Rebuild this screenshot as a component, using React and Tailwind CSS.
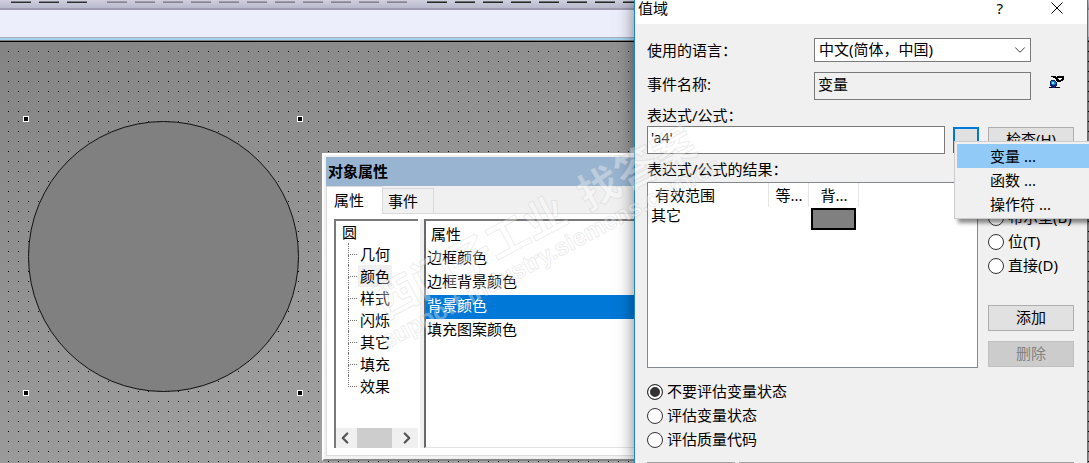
import React, { useState } from 'react';
import { ChevronDown, ChevronLeft, ChevronRight } from 'lucide-react';

const TOOLBAR_GROUPS = [
  { count: 3, tone: 'bg-[#2b302f] border-[#7d8085]' },
  { count: 11, tone: 'bg-[#85868e] border-[#9a9ba6]' },
  { count: 8, tone: 'bg-[#232826] border-[#6c7570]' },
];

const TREE_ITEMS = ['几何', '颜色', '样式', '闪烁', '其它', '填充', '效果'];
const COLOR_PROPERTIES = ['边框颜色', '边框背景颜色', '背景颜色', '填充图案颜色'];
const MENU_ITEMS = ['变量 ...', '函数 ...', '操作符 ...'];
const DATA_TYPES = ['布尔型(B)', '位(T)', '直接(D)'];
const STATUS_OPTIONS = ['不要评估变量状态', '评估变量状态', '评估质量代码'];

const HANDLES = [[23, 74], [297, 74], [23, 348], [297, 348]];

function Toolbar() {
  return (
    <header className="border-b-2 border-[#9d9daf] bg-linear-to-b from-[#cfcfdf] to-[#b9b9cd]">
      <div className="flex h-2 gap-5 overflow-hidden pl-[11px] pt-px">
        {TOOLBAR_GROUPS.map((group, i) => (
          <div key={i} className="flex shrink-0 gap-2">
            {Array.from({ length: group.count }, (_, n) => (
              <span key={n} className={`h-0.5 w-5 border-t ${group.tone}`} />
            ))}
          </div>
        ))}
      </div>
    </header>
  );
}

function Canvas() {
  return (
    <main className="min-h-0 flex-1 bg-linear-to-br from-[#848484] to-[#b0b0b0]">
      <svg className="block h-full w-full">
        <defs>
          <pattern id="grid" x="8" y="9" width="10" height="10" patternUnits="userSpaceOnUse">
            <rect width="1" height="1" fill="#000" />
          </pattern>
        </defs>
        <rect width="100%" height="100%" fill="url(#grid)" />
        <circle cx="163.5" cy="214.5" r="135" fill="#808080" stroke="#111" />
        {HANDLES.map(([x, y]) => (
          <g key={`${x}-${y}`}>
            <rect x={x} y={y} width="6" height="6" fill="#fff" />
            <rect x={x + 1} y={y + 1} width="4" height="4" fill="#000" />
          </g>
        ))}
      </svg>
    </main>
  );
}

function PropertyTree() {
  return (
    <div className="flex w-[84px] flex-col border-l-2 border-t-2 border-[#7a7a7a] bg-white">
      <div className="h-[22px] pl-[6px] leading-[22px]">圆</div>
      <ul className="ml-3 flex-1">
        {TREE_ITEMS.map((item, i) => (
          <li key={item} className="flex h-[22px] items-center">
            <span className="flex h-full w-[10px] flex-col">
              <span className="h-3 w-[9px] border-b border-l border-dotted border-[#777]" />
              {i < TREE_ITEMS.length - 1 && (
                <span className="flex-1 border-l border-dotted border-[#777]" />
              )}
            </span>
            <span className={`px-[2px] leading-[22px] ${item === '颜色' ? 'bg-[#f0f0f0]' : ''}`}>{item}</span>
          </li>
        ))}
      </ul>
      <div className="flex h-5 items-center bg-[#f0f0f0]">
        <button aria-label="向左滚动" className="w-[21px]">
          <ChevronLeft size={18} strokeWidth={3} className="text-[#555]" />
        </button>
        <span className="h-full w-[35px] bg-[#cdcdcd]" />
        <button aria-label="向右滚动" className="flex flex-1 justify-center pl-1">
          <ChevronRight size={18} strokeWidth={3} className="text-[#555]" />
        </button>
      </div>
    </div>
  );
}

function ObjectProperties() {
  return (
    <section className="absolute left-[322px] right-[400px] top-[153px] border-2 border-b-[#858585] border-l-white border-t-white bg-[#f0f0f0] pb-[3px] pl-[2px] pt-[2px]">
      <h2 className="h-[29px] bg-[#99b4d1] pl-[2px] text-[15px] font-bold leading-[29px]">对象属性</h2>
      <div className="flex h-7 items-end">
        <button className="h-full w-[57px] border-l border-r border-t border-[#d9d9d9] bg-white pb-[2px] pl-[7px] text-left">
          属性
        </button>
        <button className="h-[26px] w-[51px] border-b border-r border-t border-[#d9d9d9] pl-[5px] text-left">
          事件
        </button>
        <span className="h-full flex-1 border-b border-[#d9d9d9]" />
      </div>
      <div className="border-b border-l border-[#dcdcdc] bg-white pb-[7px] pl-[7px] pt-[5px]">
        <div className="flex h-[229px]">
          <PropertyTree />
          <div className="ml-[2px] w-1 bg-[#f0f0f0]" />
          <div className="flex-1 border-b border-l-2 border-t-2 border-b-[#e3e3e3] border-l-[#696969] border-t-[#7a7a7a]">
            <table className="w-full text-left">
              <thead>
                <tr className="h-[26px]">
                  <th className="p-0 pl-[5px] font-normal">属性</th>
                </tr>
              </thead>
              <tbody>
                {COLOR_PROPERTIES.map((name) => (
                  <tr key={name} className={name === '背景颜色' ? 'h-6 bg-[#0078d7] text-white' : 'h-6'}>
                    <td className="p-0 pb-1 pl-px">{name}</td>
                  </tr>
                ))}
              </tbody>
            </table>
          </div>
        </div>
      </div>
    </section>
  );
}

function PickerIcon() {
  return (
    <svg width="16" height="14" viewBox="0 0 16 14" shapeRendering="crispEdges">
      <path d="M2 1h5v1h1V1h7v4h-1v1h-2v1H8V6H7V4H6V3H4V2H2z" fill="#000" />
      <path d="M9 3h4v1h-1v1h-2V4H9z" fill="#fff" />
      <path d="M0 12h11v1H0z" fill="#000" />
      <path d="M2 5h4v1h1v1h1v4H7v1H6v1H3v-1H2v-1H1V6h1z" fill="#0a2070" />
      <path d="M2 6h4v1h1v2H6v1H3V9H2z" fill="#0f7fc4" />
      <path d="M3 7h2v2H3z" fill="#6ff0f0" />
    </svg>
  );
}

function Radio({ name, label, checked, onChange }) {
  return (
    <label className="flex h-6 items-center gap-1 whitespace-nowrap leading-4">
      <input
        type="radio"
        name={name}
        checked={checked}
        onChange={onChange}
        className="h-4 w-4 shrink-0 appearance-none rounded-full border border-[#333] bg-white checked:bg-[#333] checked:shadow-[inset_0_0_0_2px_white]"
      />
      <span className="pb-[2px]">{label}</span>
    </label>
  );
}

function ExpressionMenu() {
  return (
    <div
      role="menu"
      className="absolute left-px top-[14px] z-10 w-[200px] border border-[#ccc] bg-[#f0f0f0] p-[2px] shadow-[4px_4px_4px_rgba(0,0,0,0.45)]"
    >
      {MENU_ITEMS.map((item, i) => (
        <button
          key={item}
          role="menuitem"
          className={`block h-6 w-full pl-[33px] text-left ${i === 0 ? 'bg-[#91c9f7]' : ''}`}
        >
          {item}
        </button>
      ))}
    </div>
  );
}

function ResultTable() {
  return (
    <div className="h-[186px] flex-1 border border-[#828790] bg-white">
      <table className="table-fixed text-left">
        <thead>
          <tr className="h-6">
            <th className="w-[120px] border-r border-[#e5e5e5] p-0 pl-[7px] font-normal">有效范围</th>
            <th className="w-10 border-r border-[#e5e5e5] p-0 pl-[7px] font-normal">等...</th>
            <th className="w-[50px] border-r border-[#e5e5e5] p-0 pl-3 font-normal">背...</th>
          </tr>
        </thead>
        <tbody>
          <tr className="h-6">
            <td className="p-0 pl-[3px] align-top leading-4">其它</td>
            <td className="p-0" />
            <td className="p-0 pl-[3px]">
              <div className="h-[22px] w-[45px] border-2 border-black bg-[#808080]" />
            </td>
          </tr>
        </tbody>
      </table>
    </div>
  );
}

function RangeDialog() {
  const [expression, setExpression] = useState("'a4'");
  const [dataType, setDataType] = useState('');
  const [status, setStatus] = useState(STATUS_OPTIONS[0]);

  return (
    <section
      role="dialog"
      aria-label="值域"
      className="absolute bottom-0 left-[634px] right-px top-0 border-x border-[#1883d7] bg-[#f0f0f0] shadow-[0_0_16px_rgba(0,0,0,0.5)]"
    >
      <div className="flex h-6 items-start bg-white pl-[3px]">
        <h1 className="flex-1 text-[15px] leading-4">值域</h1>
        <button aria-label="帮助" className="mr-12 text-[15px] leading-4">?</button>
        <button aria-label="关闭" className="mr-6 pt-[2px]">
          <svg width="12" height="12" viewBox="0 0 12 12" stroke="#000" fill="none">
            <path d="M0.5 0.5l11 11M11.5 0.5l-11 11" />
          </svg>
        </button>
      </div>

      <div className="pl-3 pr-[13px] pt-[14px]">
        <div className="flex h-6 items-center">
          <label htmlFor="language" className="w-[167px] leading-6">使用的语言：</label>
          <div className="relative flex-1">
            <select
              id="language"
              className="block h-6 w-full appearance-none border border-[#7a7a7a] bg-white pb-[2px] pl-1 leading-5"
            >
              <option>中文(简体，中国)</option>
            </select>
            <ChevronDown size={18} strokeWidth={1} className="pointer-events-none absolute right-[2px] top-[3px]" />
          </div>
          <span className="w-[43px]" />
        </div>

        <div className="mt-[10px] flex h-7 items-start">
          <label htmlFor="event" className="w-[167px] leading-6">事件名称:</label>
          <input
            id="event"
            readOnly
            value="变量"
            className="h-7 min-w-0 flex-1 border border-[#7a7a7a] bg-[#f0f0f0] pb-[6px] pl-[3px] leading-4"
          />
          <button aria-label="选择变量" className="w-[43px] pl-[18px] pt-[3px]">
            <PickerIcon />
          </button>
        </div>

        <label htmlFor="expression" className="block h-[26px] pt-1 leading-[22px]">表达式/公式：</label>
        <div className="flex items-center">
          <input
            id="expression"
            value={expression}
            onChange={(e) => setExpression(e.target.value)}
            className="h-7 min-w-0 flex-1 border border-[#7a7a7a] bg-white pb-[6px] pl-[3px] text-sm"
          />
          <div className="relative ml-2 h-[26px] w-[26px]">
            <button aria-label="插入" className="h-full w-full border-2 border-[#0078d7] bg-[#e1e1e1]" />
            <ExpressionMenu />
          </div>
          <button className="ml-[9px] h-[26px] w-[86px] border border-[#adadad] bg-[#e1e1e1] pb-[2px]">
            检查(H)
          </button>
        </div>

        <h2 className="h-7 pt-1 leading-[22px]">表达式/公式的结果：</h2>
        <div className="flex gap-[10px]">
          <ResultTable />
          <div className="w-[86px] pt-6">
            {DATA_TYPES.map((type) => (
              <Radio
                key={type}
                name="datatype"
                label={type}
                checked={dataType === type}
                onChange={() => setDataType(type)}
              />
            ))}
            <button className="mt-[27px] block h-[26px] w-full border border-[#adadad] bg-[#e1e1e1] pb-[2px]">
              添加
            </button>
            <button
              disabled
              className="mt-[10px] block h-[26px] w-full border border-[#bfbfbf] bg-[#ccc] pb-[2px] text-[#838383]"
            >
              删除
            </button>
          </div>
        </div>

        <div className="mt-3">
          {STATUS_OPTIONS.map((option) => (
            <Radio
              key={option}
              name="status"
              label={option}
              checked={status === option}
              onChange={() => setStatus(option)}
            />
          ))}
        </div>

        <div className="mt-[10px] flex gap-1">
          <div className="w-[88px] border-t border-[#a0a0a0]" />
          <div className="flex-1 border-t border-[#a0a0a0]" />
        </div>
      </div>
    </section>
  );
}

function Watermark() {
  return (
    <div className="pointer-events-none absolute left-[541px] top-[234px] z-20 -translate-x-1/2 -translate-y-1/2 -rotate-28 whitespace-nowrap text-center font-bold text-white/35 [-webkit-text-stroke:1px_rgba(150,150,150,0.18)]">
      <p className="flex justify-center gap-5 text-[42px] leading-[42px]">
        <span>西门子工业</span>
        <span>找答案</span>
      </p>
      <p className="font-['Liberation_Sans',sans-serif] text-2xl leading-7">support.industry.siemens.com/cs</p>
    </div>
  );
}

function App() {
  return (
    <div className="relative flex h-screen flex-col overflow-hidden font-['Noto_Sans','Noto_Sans_CJK_SC',sans-serif] text-[15px] leading-5 text-black">
      <Toolbar />
      <div className="h-[27px] bg-[#edeefc]" />
      <div className="h-[5px] border-b border-t border-b-black border-t-[#a9abb8] bg-linear-to-b from-[#a5d3ef] from-60% to-[#808080] to-60%" />
      <Canvas />
      <ObjectProperties />
      <RangeDialog />
      <Watermark />
    </div>
  );
}

export default App;
